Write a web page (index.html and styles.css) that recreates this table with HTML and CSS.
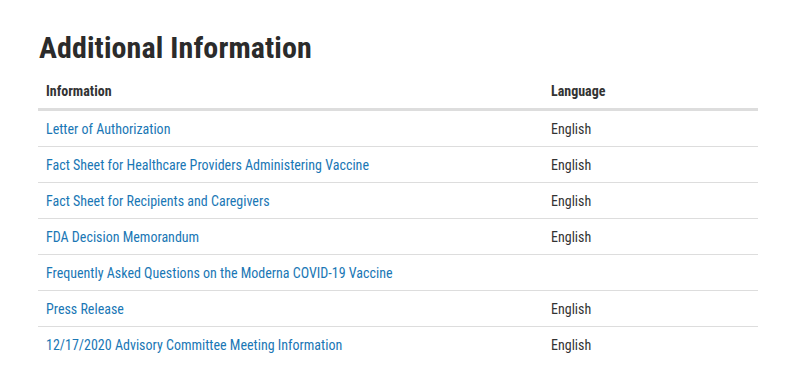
FILE: index.html
```html
<!DOCTYPE html>
<html lang="en">
<head>
<meta charset="utf-8">
<title>Additional Information</title>
<link rel="stylesheet" href="styles.css">
</head>
<body>
<main class="content">
  <h2 class="title">Additional Information</h2>
  <table class="info-table">
    <thead>
      <tr><th class="col-info">Information</th><th class="col-lang">Language</th></tr>
    </thead>
    <tbody>
      <tr><td><a href="#">Letter of Authorization</a></td><td>English</td></tr>
      <tr><td><a href="#">Fact Sheet for Healthcare Providers Administering Vaccine</a></td><td>English</td></tr>
      <tr><td><a href="#">Fact Sheet for Recipients and Caregivers</a></td><td>English</td></tr>
      <tr><td><a href="#">FDA Decision Memorandum</a></td><td>English</td></tr>
      <tr><td><a href="#">Frequently Asked Questions on the Moderna COVID-19 Vaccine</a></td><td></td></tr>
      <tr><td><a href="#">Press Release</a></td><td>English</td></tr>
      <tr><td><a href="#">12/17/2020 Advisory Committee Meeting Information</a></td><td>English</td></tr>
    </tbody>
  </table>
</main>
</body>
</html>
```
FILE: styles.css
```css
html, body {
  margin: 0;
  padding: 0;
  background: #fff;
}
body {
  font-family: "Roboto Condensed", Roboto, "Liberation Sans Narrow", sans-serif;
  font-stretch: condensed;
  color: #333;
}
.content {
  padding: 30px 37px 0 38px;
}
.title {
  margin: 0 0 8px 1px;
  font-size: 30px;
  font-weight: 700;
  line-height: 36px;
  letter-spacing: 0.1px;
  color: #2b2b2b;
}
.info-table {
  width: 100%;
  border-collapse: collapse;
  font-size: 14px;
}
.info-table th {
  text-align: left;
  font-weight: 700;
  color: #333;
  height: 34px;
  padding: 0 8px;
  border-bottom: 3px solid #ddd;
  vertical-align: middle;
}
.info-table th.col-lang { width: 199px; }
.info-table td {
  height: 35px;
  padding: 0 8px;
  border-bottom: 1px solid #ddd;
  vertical-align: middle;
}
.info-table tbody tr:last-child td { border-bottom: none; }
.info-table a {
  color: #1a77b5;
  text-decoration: none;
}
```
